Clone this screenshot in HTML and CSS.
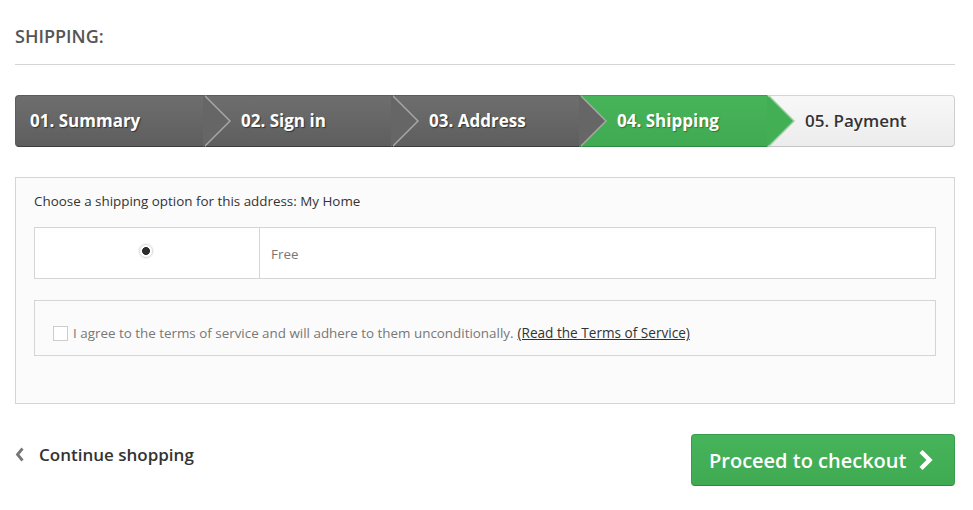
FILE: index.html
```html
<!DOCTYPE html>
<html>
<head>
  <title>Shipping</title>
  <link rel="stylesheet" href="styles.css">
</head>
<body>
  <div class="page">
    <h1 class="page-heading">Shipping:</h1>

    <ul class="steps">
      <li class="step step-done">01. Summary</li>
      <li class="step step-done">02. Sign in</li>
      <li class="step step-done">03. Address</li>
      <li class="step step-current">04. Shipping</li>
      <li class="step step-todo">05. Payment</li>
    </ul>

    <div class="carrier-box">
      <p class="carrier-title">Choose a shipping option for this address: My Home</p>
      <table class="carrier-table">
        <tr>
          <td class="carrier-radio"><span class="radio"></span></td>
          <td class="carrier-name">Free</td>
        </tr>
      </table>

      <div class="terms-box">
        <span class="checkbox"></span>
        <span class="terms-text">I agree to the terms of service and will adhere to them unconditionally.</span>
        <a href="#" class="terms-link">(Read the Terms of Service)</a>
      </div>
    </div>

    <div class="cart-nav">
      <a href="#" class="continue-link">
        <svg class="chev-left" width="9" height="15" viewBox="0 0 9 15"><path d="M7.5 1.5 L2.5 7.5 L7.5 13.5" fill="none" stroke="#777" stroke-width="2.8"/></svg>
        Continue shopping
      </a>
      <a href="#" class="checkout-btn">
        Proceed to checkout
        <svg class="chev-right" width="17" height="22" viewBox="0 0 17 22"><path d="M4 2.5 L12.5 11 L4 19.5" fill="none" stroke="#fff" stroke-width="4.4"/></svg>
      </a>
    </div>
  </div>
</body>
</html>
```

FILE: styles.css
```css
body {
  margin: 0;
  font-family: 'Open Sans', sans-serif;
  color: #333;
  background-color: #fff;
}
.page {
  width: 940px;
  margin-left: 15px;
}
.page-heading {
  margin: 24px 0 30px;
  padding: 0 0 16px;
  font-size: 18px;
  line-height: 24px;
  font-weight: 600;
  text-transform: uppercase;
  color: #555;
  border-bottom: 1px solid #d6d4d4;
}
.steps {
  display: flex;
  list-style: none;
  margin: 0 0 30px;
  padding: 0;
}
.step {
  flex: 0 0 20%;
  position: relative;
  box-sizing: border-box;
  height: 52px;
  padding-left: 38px;
  border-top: 1px solid #5c5c5c;
  border-bottom: 1px solid #3d3d3d;
  font-size: 17px;
  font-weight: 700;
  line-height: 50px;
  color: #fff;
  white-space: nowrap;
}
.step::before,
.step::after {
  content: '';
  position: absolute;
  top: -1px;
  width: 0;
  height: 0;
  border-top: 26px solid transparent;
  border-bottom: 26px solid transparent;
}
.step::before {
  right: -28px;
  border-left: 26px solid #a8a8a8;
  z-index: 2;
}
.step::after {
  right: -26px;
  border-left: 26px solid #666;
  z-index: 3;
}
.step:nth-child(1) { z-index: 5; padding-left: 14px; border-left: 1px solid #5c5c5c; border-radius: 4px 0 0 4px; }
.step:nth-child(2) { z-index: 4; }
.step:nth-child(3) { z-index: 3; }
.step:nth-child(4) { z-index: 2; }
.step:nth-child(5) { z-index: 1; }
.step-done {
  background: linear-gradient(#6e6e6e, #5e5e5e);
  text-shadow: 1px 1px 1px #333;
}
.step-current {
  background: linear-gradient(#48b45a, #3faa51);
  border-top-color: #3d9d4e;
  border-bottom-color: #2f8a3f;
  text-shadow: 1px 1px 1px #2b7a37;
}
.step-current::after {
  border-left-color: #43af55;
}
.step-current::before {
  border-left-color: #9ccfa4;
}
.step-todo {
  background: linear-gradient(#f8f8f8, #ececec);
  border-top-color: #d6d4d4;
  border-bottom-color: #c6c4c4;
  border-right: 1px solid #d0cece;
  border-radius: 0 4px 4px 0;
  color: #333;
  font-weight: 600;
  text-shadow: 0 1px #fff;
}
.step-todo::before,
.step-todo::after {
  display: none;
}
.carrier-box {
  padding: 14px 18px 47px;
  background-color: #fbfbfb;
  border: 1px solid #d6d4d4;
  font-size: 13.4px;
}
.carrier-title {
  margin: 0 0 17px;
  line-height: 18px;
}
.carrier-table {
  width: 100%;
  border-collapse: collapse;
  background-color: #fff;
  margin-bottom: 21px;
}
.carrier-table td {
  box-sizing: border-box;
  height: 51px;
  border: 1px solid #d6d4d4;
  padding: 0;
  vertical-align: middle;
}
.carrier-radio {
  width: 225px;
  text-align: center;
}
.radio {
  display: inline-block;
  box-sizing: border-box;
  width: 14px;
  height: 14px;
  margin: -6px 2px 0 0;
  border: 1px solid #dcdcdc;
  border-radius: 50%;
  background: radial-gradient(circle, #2e2e2e 3.6px, #fff 4.3px);
  box-shadow: 0 0 0 1px #f3f3f3;
  vertical-align: middle;
}
.carrier-table .carrier-name {
  padding: 2px 0 0 11px;
  color: #777;
}
.terms-box {
  display: flex;
  align-items: center;
  padding: 23px 18px 13px;
  background-color: #fbfbfb;
  border: 1px solid #d6d4d4;
  line-height: 18px;
  color: #777;
}
.checkbox {
  width: 13px;
  height: 13px;
  margin-right: 5px;
  border: 1px solid #ccc;
  background-color: #fff;
}
.terms-link {
  margin-left: 4px;
  color: #333;
  font-size: 13.6px;
}
.cart-nav {
  display: flex;
  justify-content: space-between;
  align-items: center;
  margin-top: 30px;
}
.continue-link {
  display: flex;
  align-items: center;
  margin-top: -12px;
  font-size: 17px;
  font-weight: 600;
  color: #333;
  text-decoration: none;
}
.chev-left {
  margin-right: 15px;
}
.checkout-btn {
  display: flex;
  align-items: center;
  box-sizing: border-box;
  width: 264px;
  height: 52px;
  padding-left: 17px;
  background: linear-gradient(#46b45a, #3faa52);
  border: 1px solid #3a9d4b;
  border-bottom-color: #2e8a3d;
  border-radius: 4px;
  font-size: 20px;
  font-weight: 600;
  color: #fff;
  text-decoration: none;
}
.chev-right {
  margin-left: 11px;
}
```
